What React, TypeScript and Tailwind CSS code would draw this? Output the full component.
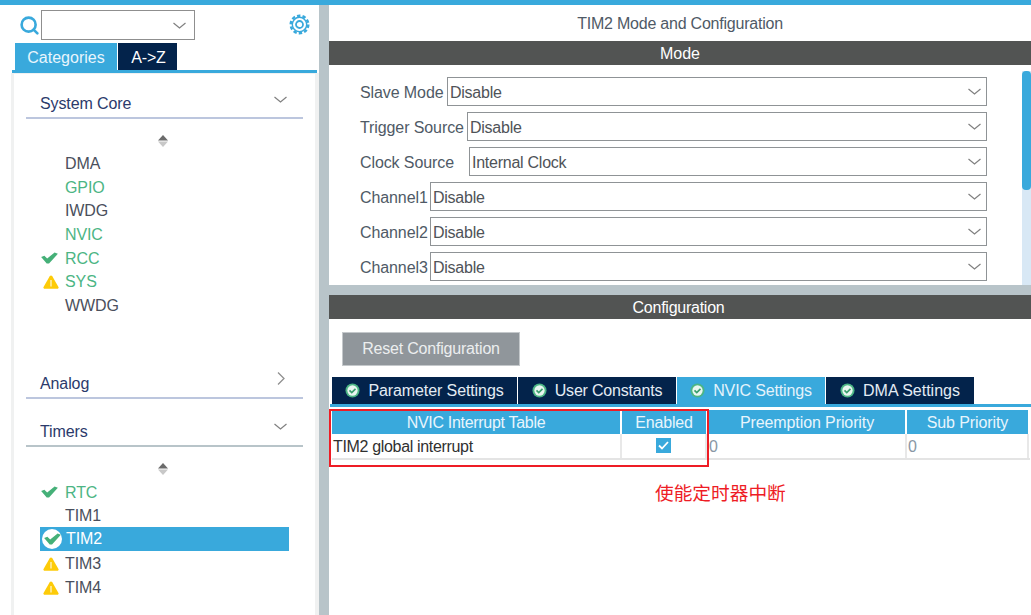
import { Search } from "lucide-react";

const font = { fontFamily: '"Liberation Sans", "Noto Sans CJK SC", sans-serif' };

/* ─── Small glyphs ─── */
function Tick({ className = "text-[#45b078]" }: { className?: string }) {
  return (
    <svg viewBox="0 0 18 14" className={`w-[17px] h-[13px] ${className}`}>
      <path d="M0 5.500l3.500-1.500 3 3 8-6.500 3.500 1.500-9.500 10.500h-2.500z" fill="currentColor" />
    </svg>
  );
}

function Warn() {
  return (
    <svg viewBox="0 0 16 14" className="w-[16px] h-[14px]">
      <path d="M8 .5l1.200.5 6.500 11.500-.7 1.300h-14l-.7-1.300 6.500-11.500z" fill="#fdcb08" />
      <rect x="7.500" y="5" width="1" height="6.500" fill="#fff" />
    </svg>
  );
}

function TabCheck() {
  return (
    <svg viewBox="0 0 16 16" className="w-[15px] h-[15px] shrink-0">
      <circle cx="8" cy="8" r="7.500" fill="#4cb584" />
      <circle cx="8" cy="8" r="5.500" fill="#e9f6f0" />
      <path d="M4.800 7.800l2.400 2.400 4-4" fill="none" stroke="#3a9f6d" strokeWidth="1.800" />
    </svg>
  );
}

function Caret() {
  return (
    <svg viewBox="0 0 13 7" className="w-[13px] h-[7px] shrink-0">
      <path d="M.5 1l6 5 6-5" fill="none" stroke="#808080" strokeWidth="1.200" />
    </svg>
  );
}

function CaretRight() {
  return (
    <svg viewBox="0 0 8 13" className="w-[8px] h-[13px] shrink-0">
      <path d="M1 .5l6 6-6 6" fill="none" stroke="#909090" strokeWidth="1.300" />
    </svg>
  );
}

function Gear() {
  return (
    <svg viewBox="0 0 21 21" className="w-[21px] h-[21px]">
      <circle cx="10.500" cy="10.500" r="8.800" fill="none" stroke="#39a9dc" strokeWidth="2.400" strokeDasharray="3.400 2.130" />
      <circle cx="10.500" cy="10.500" r="7.200" fill="none" stroke="#39a9dc" strokeWidth="1.400" />
      <circle cx="10.500" cy="10.500" r="3.500" fill="none" stroke="#39a9dc" strokeWidth="1.800" />
    </svg>
  );
}

function ScrollArrows() {
  return (
    <div className="flex justify-center pr-[4px]">
      <svg viewBox="0 0 12 14" className="w-[12px] h-[14px]">
        <path d="M6 1l5 5.500h-10z" fill="#6b6b6b" />
        <path d="M6 13l5-5.500h-10z" fill="#c8c8c8" />
      </svg>
    </div>
  );
}

/* ─── Sidebar ─── */
function NavItem({ label, status, color }: { label: string; status?: "ok" | "warn"; color: string }) {
  return (
    <div className="flex items-center h-[23.700px] ml-[27px]">
      <div className="w-[24px] flex justify-start shrink-0">
        {status === "ok" && <Tick />}
        {status === "warn" && <div className="pl-[2px] flex"><Warn /></div>}
      </div>
      <span className={`text-[16px] tracking-[-0.1px] ${color}`}>{label}</span>
    </div>
  );
}

function Section({ title, open, lineClass }: { title: string; open: boolean; lineClass: string }) {
  return (
    <div className={`mx-[12px] h-[36px] flex items-center justify-between pl-[14px] pr-[16px] pt-[8px] border-b-2 ${lineClass}`}>
      <span className="text-[16px] tracking-[-0.1px] text-[#2b3a6b]">{title}</span>
      <div className={`mb-[10px] flex ${open ? "" : "mr-[2px]"}`}>{open ? <Caret /> : <CaretRight />}</div>
    </div>
  );
}

function Sidebar() {
  return (
    <aside className="w-[319px] shrink-0 flex flex-col">
      <div className="flex items-center h-[38px] pt-[2px] pl-[19px] pr-[9px]">
        <Search className="w-[21px] h-[21px] text-[#39a9dc]" strokeWidth={3} />
        <div className="ml-[1px] w-[154px] h-[30px] border border-[#8f8f8f] flex items-center justify-end pr-[8px]">
          <Caret />
        </div>
        <div className="ml-auto flex mb-[2px]"><Gear /></div>
      </div>
      <div className="flex pl-[15px] h-[27px] gap-[1px]">
        <div className="w-[102px] pt-[2px] bg-[#39a9dc] text-[#e8f5fc] text-[16px] flex items-center justify-center">Categories</div>
        <div className="w-[59px] pt-[2px] pl-[2px] bg-[#03234b] text-white text-[16px] tracking-[-0.2px] flex items-center justify-center">A-&gt;Z</div>
      </div>
      <div className="ml-[12px] mr-[2px] h-[3px] bg-[#39a9dc]" />
      <div className="flex-1 ml-[11px] border-l-[3px] border-[#f0f1f1] border-r-[4px] border-t-[1px] pt-[9px]">
        <Section title="System Core" open lineClass="border-[#bcc6de]" />
        <div className="pt-[15px] pb-[4px]"><ScrollArrows /></div>
        <NavItem label="DMA" color="text-[#4a4f5c]" />
        <NavItem label="GPIO" color="text-[#4cb584]" />
        <NavItem label="IWDG" color="text-[#4a4f5c]" />
        <NavItem label="NVIC" color="text-[#4cb584]" />
        <NavItem label="RCC" status="ok" color="text-[#4cb584]" />
        <NavItem label="SYS" status="warn" color="text-[#4cb584]" />
        <NavItem label="WWDG" color="text-[#4a4f5c]" />
        <div className="h-[45px]" />
        <Section title="Analog" open={false} lineClass="border-[#bcc6de]" />
        <div className="h-[12px]" />
        <Section title="Timers" open lineClass="border-[#b8c4c9]" />
        <div className="pt-[15px] pb-[5px]"><ScrollArrows /></div>
        <NavItem label="RTC" status="ok" color="text-[#4cb584]" />
        <NavItem label="TIM1" color="text-[#4a4f5c]" />
        <div className="flex items-center h-[24px] -mt-[1px] mb-[1px] ml-[26px] mr-[26px] bg-[#39a9dc]">
          <div className="w-[24px] h-[24px] flex items-center justify-center shrink-0">
            <div className="w-[20px] h-[20px] rounded-full bg-white flex items-center justify-center">
              <Tick />
            </div>
          </div>
          <span className="text-[16px] tracking-[-0.1px] text-white ml-[2px]">TIM2</span>
        </div>
        <NavItem label="TIM3" status="warn" color="text-[#4a4f5c]" />
        <NavItem label="TIM4" status="warn" color="text-[#4a4f5c]" />
      </div>
    </aside>
  );
}

/* ─── Mode form ─── */
const modes = [
  { label: "Slave Mode", value: "Disable", left: 447 },
  { label: "Trigger Source", value: "Disable", left: 467 },
  { label: "Clock Source", value: "Internal Clock", left: 469 },
  { label: "Channel1", value: "Disable", left: 430 },
  { label: "Channel2", value: "Disable", left: 430 },
  { label: "Channel3", value: "Disable", left: 430 },
];

function ModeRow({ label, value, left }: { label: string; value: string; left: number }) {
  return (
    <div className="flex items-center h-[29px] pl-[31px] w-[658px]">
      <span className="text-[16px] tracking-[-0.1px] pt-[2px] text-[#4f5a66] whitespace-nowrap" style={{ width: left - 360 }}>{label}</span>
      <div className="flex-1 h-[29px] border border-[#8f9396] flex items-center justify-between pl-[2px] pr-[5px]">
        <span className="text-[16px] tracking-[-0.25px] pt-[2px] text-[#4f5358]">{value}</span>
        <Caret />
      </div>
    </div>
  );
}

/* ─── Config tabs and table ─── */
function ConfigTab({ label, active, width, tracking }: { label: string; active?: boolean; width: number; tracking: string }) {
  return (
    <div
      className={`h-[27px] flex items-center justify-center gap-[8px] text-[16px] ${tracking} ${active ? "bg-[#39a9dc] text-[#e4f3fb]" : "bg-[#03234b] text-[#e4ecf4]"}`}
      style={{ width }}
    >
      <TabCheck />
      <span>{label}</span>
    </div>
  );
}

function Th({ label, width, tracking }: { label: string; width: number; tracking: string }) {
  return (
    <div className={`h-[24px] pt-[1px] bg-[#39a9dc] text-[#e8f5fc] text-[16px] ${tracking} flex items-center justify-center shrink-0`} style={{ width }}>
      {label}
    </div>
  );
}

export default function App() {
  return (
    <div className="w-[1031px] h-[615px] overflow-hidden bg-white flex flex-col" style={font}>
      <div className="h-[5px] bg-[#39a9dc] shrink-0" />
      <div className="flex flex-1 min-h-0">
        <Sidebar />
        <div className="w-[10px] bg-[#b8c4c9] shrink-0" />
        <main className="flex-1 flex flex-col min-w-0 relative">
          <div className="h-[36px] pt-[2px] flex items-center justify-center text-[16px] tracking-[-0.22px] text-[#4f5a66]">TIM2 Mode and Configuration</div>
          <div className="h-[24px] pt-[2px] bg-[#525453] text-white text-[16px] flex items-center justify-center">Mode</div>
          <div className="h-[220px] relative flex flex-col gap-[6px] pt-[12px]">
            {modes.map((m) => (
              <ModeRow key={m.label} {...m} />
            ))}
            <div className="absolute right-0 top-[6px] bottom-0 w-[9px] bg-[#d8e8f5]">
              <div className="h-[119px] bg-[#39a9dc] rounded-t-[4px] rounded-b-[4px]" />
            </div>
          </div>
          <div className="h-[10px] bg-[#b8c4c9]" />
          <div className="h-[24px] pt-[2px] pr-[3px] bg-[#525453] text-white text-[16px] tracking-[-0.25px] flex items-center justify-center">Configuration</div>
          <div className="pt-[13px] pl-[13px]">
            <div className="w-[178px] h-[34px] border border-[#c4c8cb] bg-[#90969b] text-[#eceeef] text-[16px] tracking-[-0.2px] flex items-center justify-center">Reset Configuration</div>
          </div>
          <div className="flex pl-[3px] gap-[1px] mt-[11px]">
            <ConfigTab label="Parameter Settings" width={185} tracking="tracking-[-0.1px]" />
            <ConfigTab label="User Constants" width={158} tracking="tracking-[-0.2px]" />
            <ConfigTab label="NVIC Settings" active width={148} tracking="tracking-[-0.15px]" />
            <ConfigTab label="DMA Settings" width={148} tracking="tracking-normal" />
          </div>
          <div className="h-[3px] bg-[#39a9dc] ml-[1px]" />
          <div className="mt-[3px] ml-[3px] w-[697px]">
            <div className="flex">
              <Th label="NVIC Interrupt Table" width={288} tracking="tracking-[-0.3px]" />
              <div className="w-[2px] shrink-0" />
              <Th label="Enabled" width={84} tracking="tracking-[-0.15px]" />
              <div className="w-[3px] shrink-0" />
              <Th label="Preemption Priority" width={196} tracking="tracking-[-0.1px]" />
              <div className="w-[2px] shrink-0" />
              <Th label="Sub Priority" width={121} tracking="tracking-[-0.1px]" />
            </div>
            <div className="flex h-[26px] border-b-2 border-[#e4e4e4] text-[16px] w-[698px]">
              <div className="w-[290px] flex items-center pl-[1px] pt-[2px] tracking-[-0.33px] text-[#303030] border-r-2 border-[#e8e8e8] shrink-0">TIM2 global interrupt</div>
              <div className="w-[85px] flex items-center justify-center border-r-2 border-[#e8e8e8] shrink-0">
                <div className="w-[15px] h-[15px] bg-[#39a9dc] flex items-center justify-center mb-[1px]">
                  <svg viewBox="0 0 15 15" className="w-[15px] h-[15px]">
                    <path d="M3 7.500l3 3 6-6.500" fill="none" stroke="#fff" strokeWidth="1.800" />
                  </svg>
                </div>
              </div>
              <div className="w-[200px] flex items-center pl-[2px] pt-[2px] text-[#8a97a5] border-r-2 border-[#e8e8e8] shrink-0">0</div>
              <div className="w-[122px] flex items-center pl-[1px] pt-[2px] text-[#8a97a5] border-r-2 border-[#e8e8e8] shrink-0">0</div>
            </div>
          </div>
          <div className="absolute left-0 top-[404px] w-[380px] h-[58px] border-2 border-[#ee1c25] pointer-events-none" />
          <div className="absolute left-[326px] top-[475px] text-[18.700px] text-[#ee1c25]">使能定时器中断</div>
        </main>
      </div>
    </div>
  );
}
